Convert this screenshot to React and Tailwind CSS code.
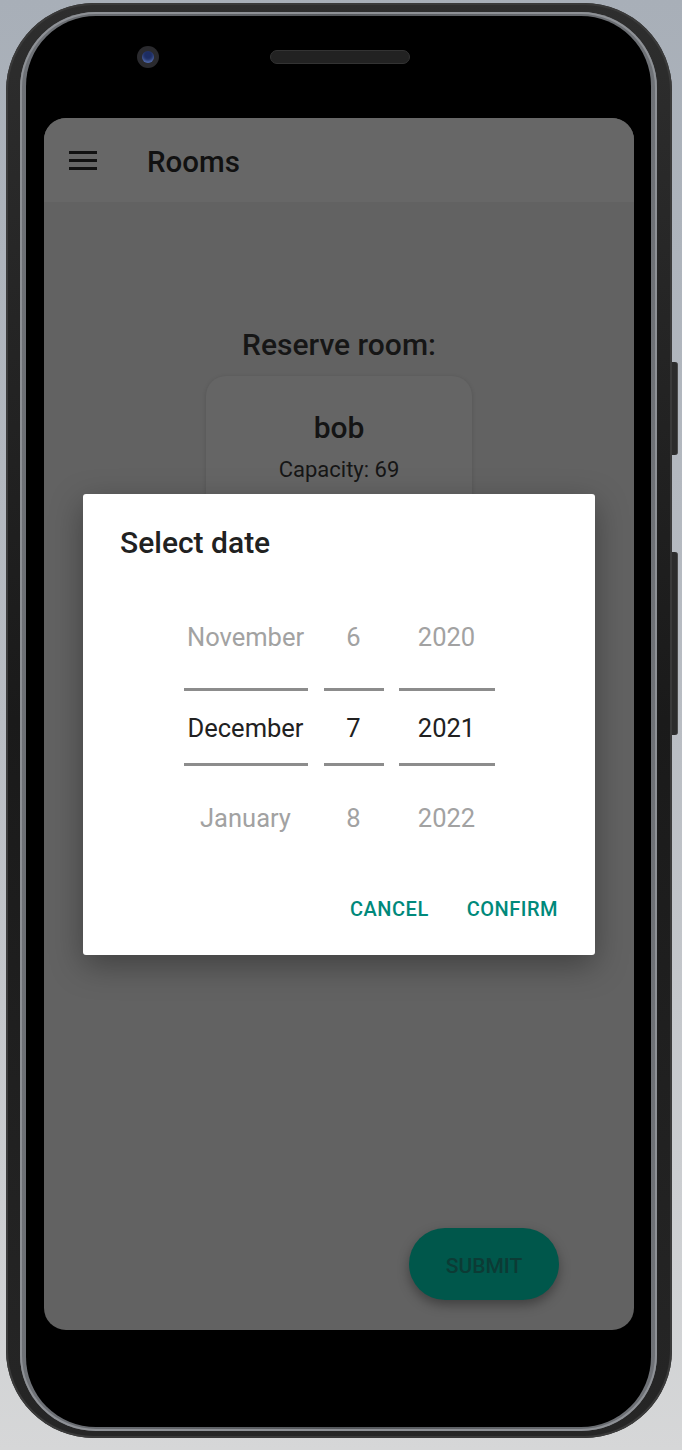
import React from 'react'

const font = { fontFamily: 'Roboto, "Noto Sans", sans-serif' }

const columns = [
    { w: 'w-[124px]', items: ['November', 'December', 'January'] },
    { w: 'w-[60px]', items: ['6', '7', '8'] },
    { w: 'w-[96px]', items: ['2020', '2021', '2022'] },
]

const PickerColumn = ({ col }) => (
    <div className={`${col.w} flex flex-col text-[25.5px]`}>
        <div className="h-[95px] pb-[6px] flex items-center justify-center text-[#a2a2a2]">{col.items[0]}</div>
        <div className="h-[3px] bg-[#8c8c8c]"></div>
        <div className="h-[72px] pt-[3px] flex items-center justify-center text-[#212121]">{col.items[1]}</div>
        <div className="h-[3px] bg-[#8c8c8c]"></div>
        <div className="h-[105px] flex items-center justify-center text-[#a2a2a2]">{col.items[2]}</div>
    </div>
)

const DatePickerDialog = () => (
    <div className="absolute inset-0 flex items-center justify-center">
        <div className="w-[512px] bg-white rounded-[3px] shadow-[0_10px_32px_rgba(0,0,0,0.35)] flex flex-col">
            <div className="pt-[31px] pl-[37px] text-[30px] leading-[36px] font-medium text-[#212121]">Select date</div>

            {/* wheels */}
            <div className="mt-[32px] flex justify-center gap-[16px]">
                <PickerColumn col={columns[0]} />
                <PickerColumn col={columns[1]} />
                <div className="-ml-[1px]">
                    <PickerColumn col={columns[2]} />
                </div>
            </div>

            <div className="mt-[13px] mb-[21px] h-[50px] flex items-center justify-end gap-[38px] pr-[37px]">
                <button className="text-[20px] font-medium tracking-wide text-[#00897b]">CANCEL</button>
                <button className="text-[20px] font-medium tracking-wide text-[#00897b]">CONFIRM</button>
            </div>
        </div>
    </div>
)

const Screen = () => (
    <div className="relative w-[590px] h-[1212px] rounded-[22px] overflow-hidden bg-[#626262] flex flex-col">
        {/* App bar */}
        <div className="h-[84px] bg-[#676767] flex items-center pl-[25px] shrink-0">
            <div className="flex flex-col gap-[5px]">
                <div className="h-[3px] w-[28px] bg-[#111]"></div>
                <div className="h-[3px] w-[28px] bg-[#111]"></div>
                <div className="h-[3px] w-[28px] bg-[#111]"></div>
            </div>
            <div className="ml-[50px] pt-[4px] text-[29.5px] font-medium text-[#111]">Rooms</div>
        </div>

        {/* Body */}
        <div className="flex-1 flex flex-col items-center">
            <div className="mt-[126px] text-[30px] leading-[34px] font-medium text-[#161616]">Reserve room:</div>
            <div className="mt-[14px] w-[266px] h-[190px] rounded-[20px] bg-[#656565] shadow-[0_1px_4px_rgba(0,0,0,0.15)] flex flex-col items-center pt-[34px]">
                <div className="text-[30px] leading-[36px] font-medium text-[#141414]">bob</div>
                <div className="mt-[10px] text-[22px] leading-[28px] text-[#161616]">Capacity: 69</div>
            </div>
        </div>

        <div className="flex justify-end pr-[75px] pb-[30px]">
            <button className="w-[150px] h-[72px] pt-[5px] rounded-full bg-[#00574b] shadow-[0_5px_12px_rgba(0,0,0,0.35)] text-[21px] font-medium text-[#0c3b35]">SUBMIT</button>
        </div>

        <DatePickerDialog />
    </div>
)

const App = () => {
    return (
        <div style={font} className="w-[682px] h-[1450px] overflow-hidden bg-gradient-to-b from-[#a8afb8] via-[#b9bdc3] to-[#d6d7d8] pt-[3px] pl-[6px]">
            {/* Phone body */}
            <div className="relative w-[666px] rounded-[88px] bg-gradient-to-b from-[#2e2e2e] via-[#1a1a1a] to-[#262626] pt-[9px] pl-[14px] pr-[15px] pb-[7px] shadow-[inset_0_0_0_2px_#3a3a3a]">
                {/* side buttons */}
                <div className="absolute right-[-6px] top-[359px] w-[6px] h-[93px] rounded-r-[3px] bg-[#2c2c2c] border-r border-[#4a4a4a]"></div>
                <div className="absolute right-[-6px] top-[549px] w-[6px] h-[183px] rounded-r-[3px] bg-[#2c2c2c] border-r border-[#4a4a4a]"></div>

                <div className="rounded-[76px] bg-gradient-to-r from-[#6f7277] via-[#55585c] to-[#6f7277] px-[6px] py-[4px] shadow-[inset_0_0_0_2px_#8e9196]">
                    <div className="rounded-[70px] bg-black pl-[18px] pr-[17px] pb-[97px]">
                        {/* camera + speaker */}
                        <div className="h-[82px] mb-[20px] flex items-center pl-[93px]">
                            <div className="w-[22px] h-[22px] rounded-full bg-[#2a2a2e] flex items-center justify-center">
                                <div className="w-[12px] h-[12px] rounded-full bg-[#1d2d63] shadow-[inset_0_-2px_3px_rgba(120,150,220,0.6)]"></div>
                            </div>
                            <div className="ml-[111px] w-[140px] h-[14px] rounded-full bg-[#222] border border-[#333]"></div>
                        </div>
                        <Screen />
                    </div>
                </div>
            </div>
        </div>
    )
}

export default App
